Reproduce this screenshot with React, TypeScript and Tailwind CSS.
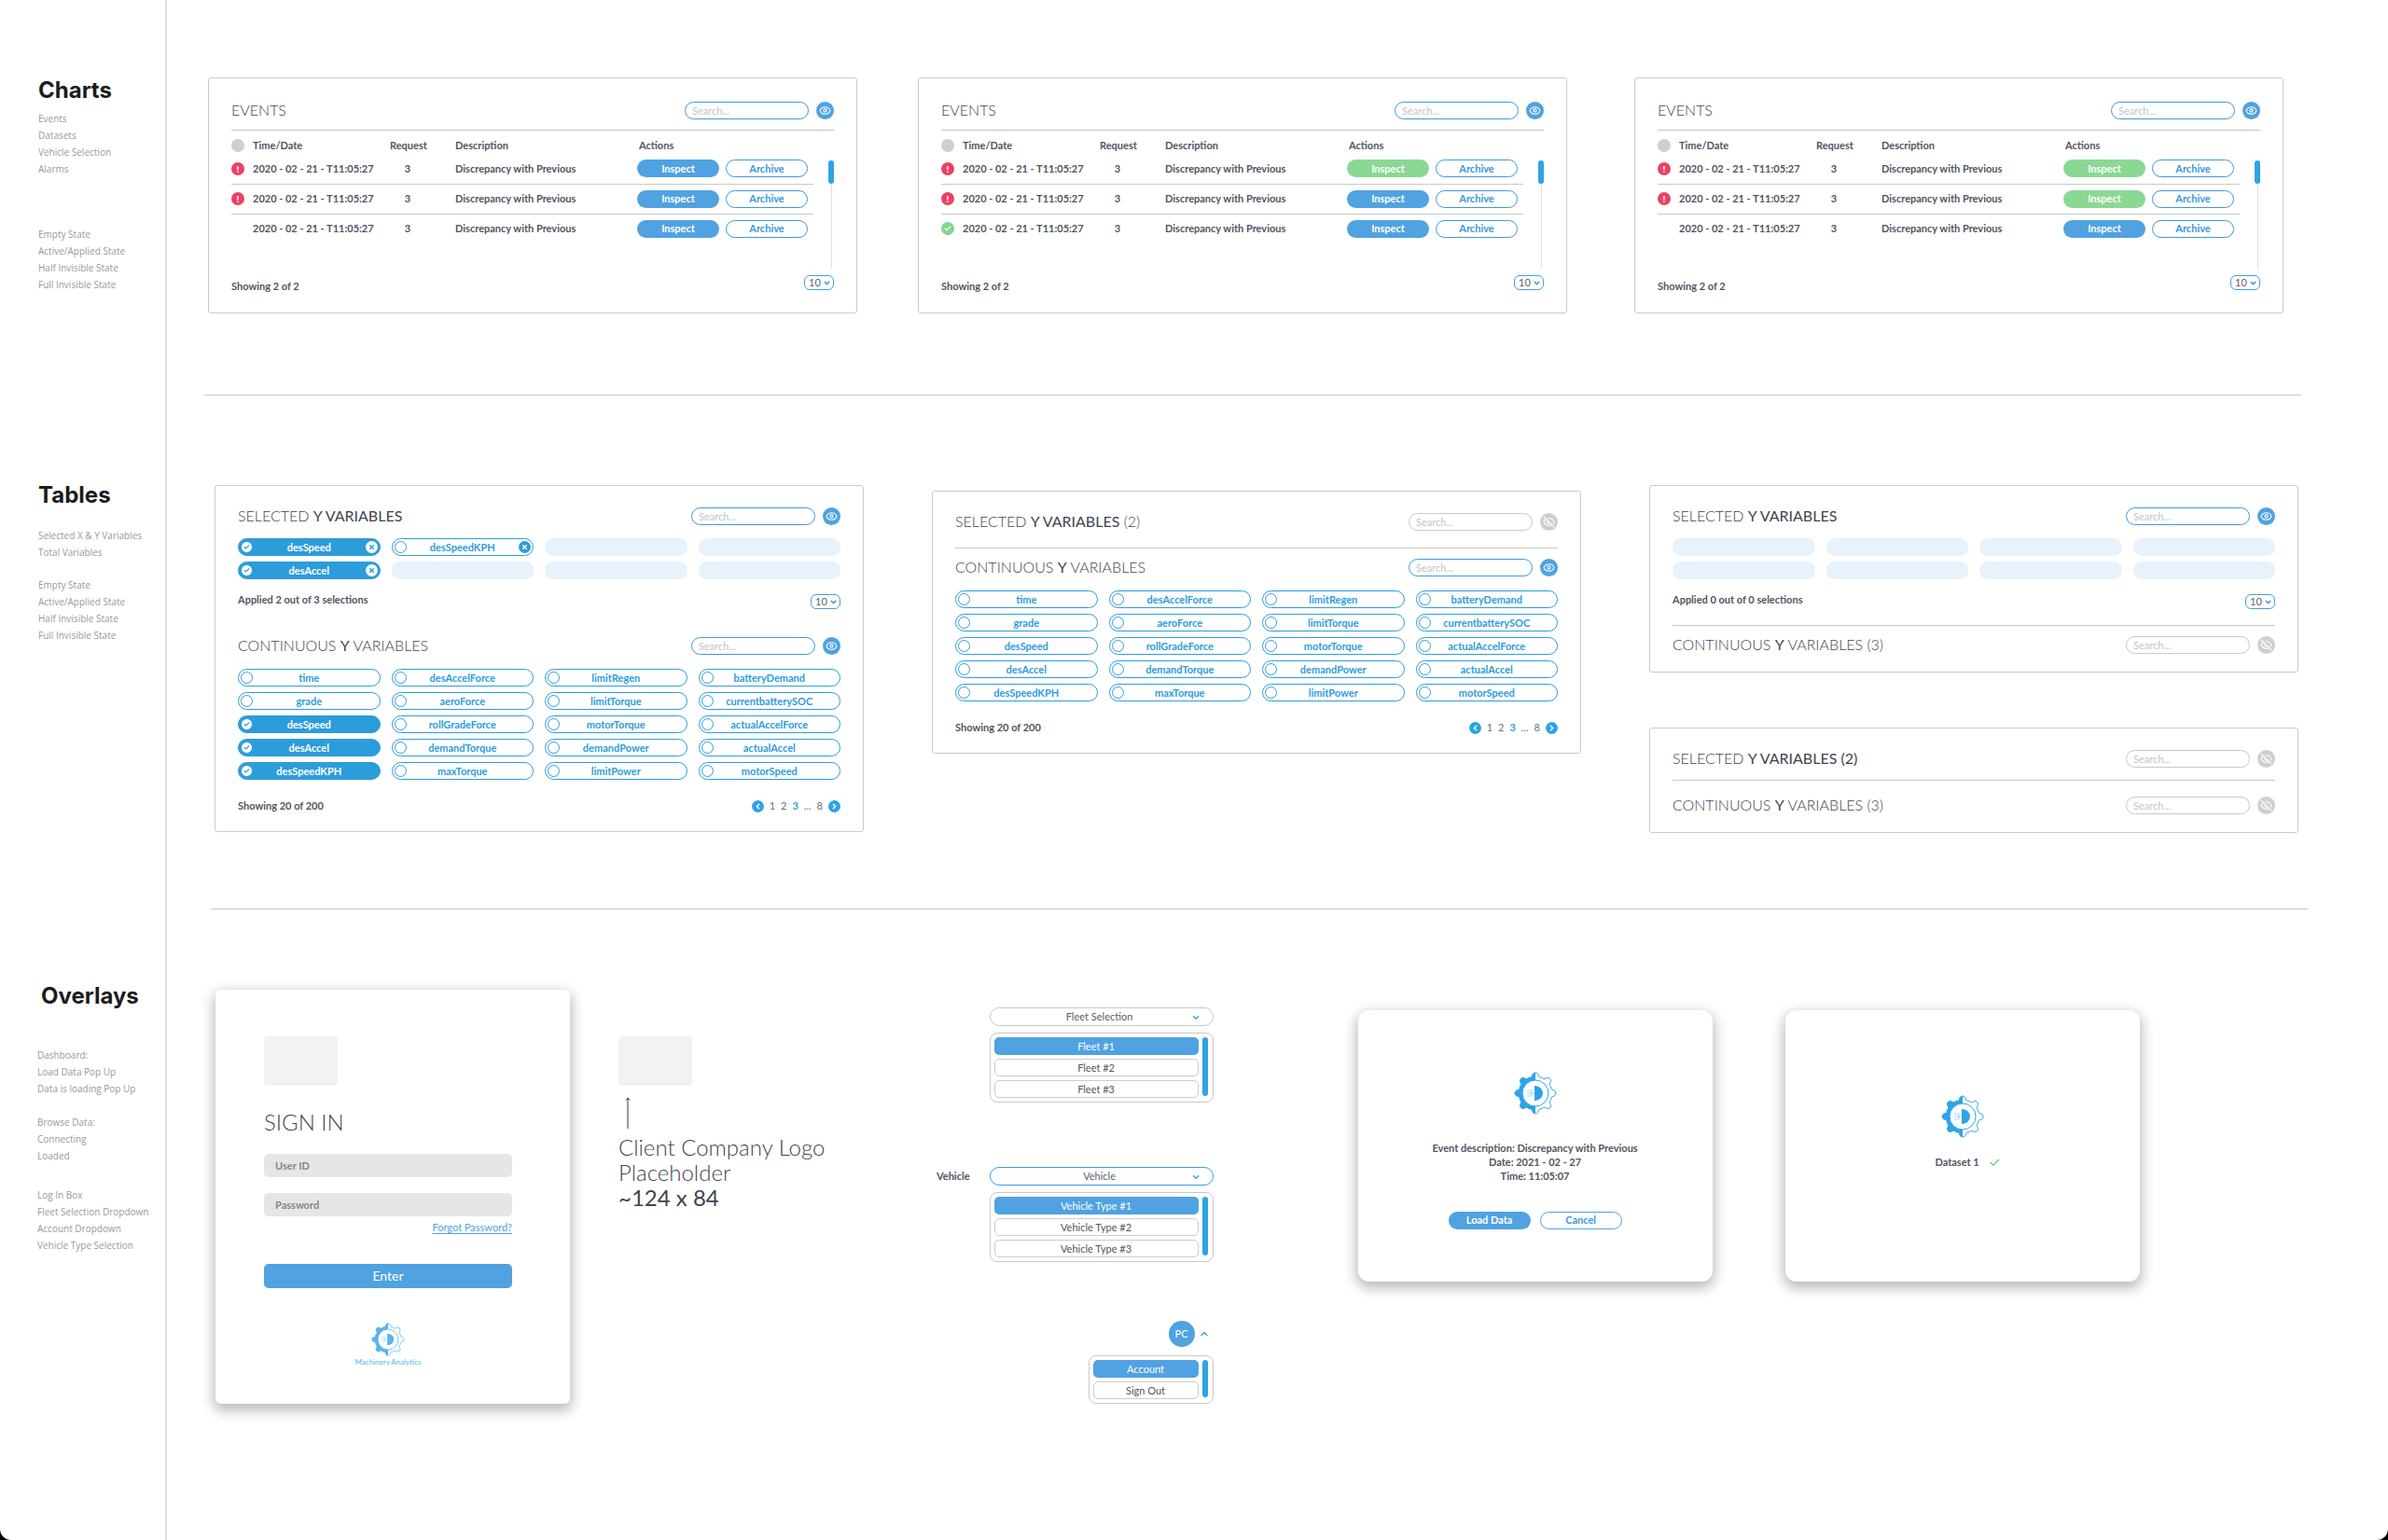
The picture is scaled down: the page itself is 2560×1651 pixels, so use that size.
import { useState, type ReactNode } from 'react';
import { Check, ChevronDown, ChevronLeft, ChevronRight, ChevronUp, Eye, EyeOff, X } from 'lucide-react';

type Status = 'alert' | 'done' | 'none';

interface EventRow {
  status: Status;
  inspected: boolean;
}

const eventCards: EventRow[][] = [
  [
    { status: 'alert', inspected: false },
    { status: 'alert', inspected: false },
    { status: 'none', inspected: false },
  ],
  [
    { status: 'alert', inspected: true },
    { status: 'alert', inspected: false },
    { status: 'done', inspected: false },
  ],
  [
    { status: 'alert', inspected: true },
    { status: 'alert', inspected: true },
    { status: 'none', inspected: false },
  ],
];

const variables = [
  'time', 'desAccelForce', 'limitRegen', 'batteryDemand',
  'grade', 'aeroForce', 'limitTorque', 'currentbatterySOC',
  'desSpeed', 'rollGradeForce', 'motorTorque', 'actualAccelForce',
  'desAccel', 'demandTorque', 'demandPower', 'actualAccel',
  'desSpeedKPH', 'maxTorque', 'limitPower', 'motorSpeed',
];

const stateNotes = ['Empty State', 'Active/Applied State', 'Half Invisible State', 'Full Invisible State'];

// Eight-tooth gear outline centred on 0,0
function gearPath() {
  const point = (deg: number, r: number) => {
    const rad = (deg * Math.PI) / 180;
    return `${(Math.cos(rad) * r).toFixed(2)} ${(Math.sin(rad) * r).toFixed(2)}`;
  };
  let d = `M${point(-106, 17.5)}`;
  for (let i = 0; i < 8; i++) {
    const a = -90 + i * 45;
    d += ` Q${point(a - 11, 18)} ${point(a - 8, 20.5)}`;
    d += ` Q${point(a - 6, 22)} ${point(a, 22)}`;
    d += ` Q${point(a + 6, 22)} ${point(a + 8, 20.5)}`;
    d += ` Q${point(a + 11, 18)} ${point(a + 16, 17.5)}`;
    d += ` Q${point(a + 22, 19)} ${point(a + 29, 17.5)}`;
  }
  return d + 'Z';
}

function GearLogo({ className }: { className: string }) {
  const d = gearPath();
  return (
    <svg viewBox="-23 -23 46 46" className={className} aria-hidden="true">
      <clipPath id="gear-left">
        <rect x="-23" y="-23" width="23" height="46" />
      </clipPath>
      <path d={d} fill="none" stroke="currentColor" strokeWidth="1" />
      <path d={d} fill="currentColor" clipPath="url(#gear-left)" />
      <circle r="14" fill="white" stroke="currentColor" strokeWidth="1" />
      <path d="M-1 -8 A9 8 0 0 1 -1 8 Z" fill="currentColor" />
      <path d="M-9 -3H-4V3H-9M-9 0H-1" fill="none" stroke="currentColor" strokeWidth="0.6" opacity="0.7" />
    </svg>
  );
}

function SideNotes({ title, groups, className, listClass }: { title: string; groups: string[][]; className: string; listClass: string }) {
  return (
    <aside className={`w-[179px] shrink-0 border-r-2 border-[#dedede] ${className}`}>
      <h2 className="text-2xl leading-[28px] font-bold text-[#1c1c1c] [font-family:Inter,sans-serif]">{title}</h2>
      <div className={`flex flex-col text-[10px] leading-[18px] whitespace-nowrap text-[#999999] [font-family:'Open_Sans','Noto_Sans',sans-serif] ${listClass}`}>
        {groups.map((group) => (
          <ul key={group[0]}>
            {group.map((note) => (
              <li key={note}>{note}</li>
            ))}
          </ul>
        ))}
      </div>
    </aside>
  );
}

function Card({ children, className = '' }: { children: ReactNode; className?: string }) {
  return <div className={`rounded-[3px] border border-[#cbcbcb] px-6 ${className}`}>{children}</div>;
}

function PanelHeader({ children, hidden = false }: { children: ReactNode; hidden?: boolean }) {
  const [off, setOff] = useState(hidden);
  return (
    <div className="flex h-5 items-center">
      <h3 className="flex-1 text-base leading-5 font-light whitespace-nowrap text-[#3f444e]">{children}</h3>
      <input
        type="search"
        aria-label="Search"
        placeholder="Search..."
        className={`h-[19px] w-[133px] rounded-full border px-[7px] text-[11px] placeholder:text-[#c4c4c4] ${off ? 'border-[#c8c8c8]' : 'border-[#3f98de]'}`}
      />
      <button
        type="button"
        aria-label="Toggle visibility"
        onClick={() => setOff(!off)}
        className={`ml-2 flex size-[19px] items-center justify-center rounded-full text-white ${off ? 'bg-[#cfcfcf]' : 'bg-[#50a2e1]'}`}
      >
        {off ? <EyeOff size={13} /> : <Eye size={13} />}
      </button>
    </div>
  );
}

function PageSize() {
  return (
    <div className="relative">
      <select
        aria-label="Rows per page"
        className="block h-4 w-8 appearance-none rounded-md border border-[#3fa0e2] bg-white pl-1 text-[11px] leading-[14px] text-[#5b606a]"
      >
        <option>10</option>
      </select>
      <ChevronDown size={9} strokeWidth={4} className="pointer-events-none absolute top-1 right-[3px] text-[#3fa0e2]" />
    </div>
  );
}

function StatusIcon({ status }: { status: Status }) {
  if (status === 'alert') {
    return (
      <span className="flex size-[14px] items-center justify-center rounded-full bg-[#eb4263] text-[10px] font-black text-white">!</span>
    );
  }
  if (status === 'done') {
    return (
      <span className="flex size-[14px] items-center justify-center rounded-full bg-[#86d58f] text-white">
        <Check size={8} strokeWidth={4} />
      </span>
    );
  }
  return null;
}

const pill = 'flex h-[19px] w-[88px] items-center justify-center rounded-full text-[11px] font-bold';

function EventsCard({ rows, className = '' }: { rows: EventRow[]; className?: string }) {
  return (
    <Card className={`flex-1 pt-6 pb-5 ${className}`}>
      <PanelHeader>EVENTS</PanelHeader>
      <div className="mt-[11px] flex items-start justify-between border-t border-[#c4c4c4]">
        <table className="w-[624px] table-fixed text-left text-[11px] leading-4 font-bold text-[#50555f]">
          <colgroup>
            <col className="w-[23px]" />
            <col className="w-[147px]" />
            <col className="w-[38px]" />
            <col />
            <col className="w-[189px]" />
          </colgroup>
          <thead>
            <tr className="h-[25px]">
              <th className="pt-1.5"><span className="block size-[14px] rounded-full bg-[#cfcfcf]" /></th>
              <th className="pt-1.5">Time/Date</th>
              <th className="pt-1.5 text-center">Request</th>
              <th className="pt-1.5 pl-8">Description</th>
              <th className="pt-1.5 pl-0.5">Actions</th>
            </tr>
          </thead>
          <tbody>
            {rows.map((row, i) => (
              <tr key={i} className="h-8 border-b border-[#c8c8c8] last:border-b-0">
                <td><StatusIcon status={row.status} /></td>
                <td>2020 - 02 - 21 - T11:05:27</td>
                <td className="text-center">3</td>
                <td className="pl-8">Discrepancy with Previous</td>
                <td>
                  <div className="flex gap-[7px]">
                    <button type="button" className={`${pill} text-white ${row.inspected ? 'bg-[#8ad894]' : 'bg-[#50a2e1]'}`}>Inspect</button>
                    <button type="button" className={`${pill} border border-[#3f98de] text-[#3a97dd]`}>Archive</button>
                  </div>
                </td>
              </tr>
            ))}
          </tbody>
        </table>
        <div className="mt-8 flex h-[115px] w-1.5 flex-col items-center">
          <div className="h-[25px] w-1.5 rounded-full bg-[#2ea3e6]" />
          <div className="w-px flex-1 bg-[#dedede]" />
        </div>
      </div>
      <div className="mt-2 flex items-start justify-between">
        <p className="pt-1 text-[11px] leading-4 font-bold text-[#50555f]">Showing 2 of 2</p>
        <PageSize />
      </div>
    </Card>
  );
}

function Chip({ name, on = false, removable = false }: { name: string; on?: boolean; removable?: boolean }) {
  return (
    <div className={`flex h-[19px] items-center rounded-full border border-[#2d9cdb] px-0.5 text-[11px] leading-[17px] font-bold ${on ? 'bg-[#2d9cdb] text-white' : 'text-[#2d9cdb]'}`}>
      <label className="flex flex-1 items-center">
        <span className="relative">
          <input type="checkbox" defaultChecked={on} className="block size-[13px] appearance-none rounded-full border border-[#2d9cdb] bg-white" />
          {on && <Check size={7} strokeWidth={4} className="pointer-events-none absolute top-[3px] left-[3px] text-[#2d9cdb]" />}
        </span>
        <span className={`flex-1 text-center ${removable ? '' : 'pr-[13px]'}`}>{name}</span>
      </label>
      {removable && (
        <button type="button" aria-label={`Remove ${name}`} className={`flex size-[13px] items-center justify-center rounded-full ${on ? 'bg-white text-[#2d9cdb]' : 'bg-[#2d9cdb] text-white'}`}>
          <X size={7} strokeWidth={5} />
        </button>
      )}
    </div>
  );
}

function EmptyChips({ count }: { count: number }) {
  return Array.from({ length: count }, (_, i) => <div key={i} className="h-[19px] rounded-[9px] bg-[#e7f2fb]" />);
}

function ChipGrid({ children, className }: { children: ReactNode; className: string }) {
  return <div className={`grid grid-cols-4 gap-x-3 gap-y-1.5 ${className}`}>{children}</div>;
}

function Applied({ text }: { text: string }) {
  return (
    <div className="mt-3.5 flex items-end justify-between">
      <p className="pb-0.5 text-[11px] leading-4 font-bold text-[#50555f]">{text}</p>
      <PageSize />
    </div>
  );
}

function VariableList({ selected = [] }: { selected?: string[] }) {
  return (
    <>
      <ChipGrid className="mt-[15px]">
        {variables.map((name) => (
          <Chip key={name} name={name} on={selected.includes(name)} />
        ))}
      </ChipGrid>
      <div className="mt-5 flex items-center justify-between text-[11px] leading-4">
        <p className="font-bold text-[#50555f]">Showing 20 of 200</p>
        <nav aria-label="Pages" className="flex items-center gap-1.5 text-[#6d727b]">
          <button type="button" aria-label="Previous page" className="flex size-[13px] items-center justify-center rounded-full bg-[#2ea3e6] text-white">
            <ChevronLeft size={9} strokeWidth={4} />
          </button>
          <a href="#1">1</a>
          <a href="#2">2</a>
          <a href="#3" className="font-bold text-[#2ea3e6]">3</a>
          <span>...</span>
          <a href="#8">8</a>
          <button type="button" aria-label="Next page" className="flex size-[13px] items-center justify-center rounded-full bg-[#2ea3e6] text-white">
            <ChevronRight size={9} strokeWidth={4} />
          </button>
        </nav>
      </div>
    </>
  );
}

function Dropdown({ label, options, blue = false }: { label: string; options: string[]; blue?: boolean }) {
  return (
    <div className="w-60">
      <div className="relative">
        <select
          id={label}
          aria-label={label}
          className={`block h-5 w-full appearance-none rounded-full border bg-white pr-1 text-center text-[11px] leading-[18px] text-[#5b606a] [text-align-last:center] ${blue ? 'border-[#3f98de]' : 'border-[#c8c8c8]'}`}
        >
          <option>{label}</option>
        </select>
        <ChevronDown size={10} strokeWidth={4} className="pointer-events-none absolute top-[6px] right-3.5 text-[#50a2e1]" />
      </div>
      <Menu options={options} />
    </div>
  );
}

function Menu({ options }: { options: string[] }) {
  return (
    <div className="mt-[7px] flex gap-1 rounded-lg border border-[#c8c8c8] p-1">
      <div className="flex flex-1 flex-col gap-1">
        {options.map((option, i) => (
          <button
            key={option}
            type="button"
            className={`h-[19px] rounded-[5px] text-center text-[11px] leading-[17px] ${i === 0 ? 'bg-[#50a2e1] text-white' : 'border border-[#cccccc] text-[#50555f]'}`}
          >
            {option}
          </button>
        ))}
      </div>
      <div className="mr-px mb-0.5 w-1.5 rounded-full bg-[#2ea3e6]" />
    </div>
  );
}

const overlayShadow = 'bg-white shadow-[0_5px_14px_2px_rgba(0,0,0,0.28)]';
const loginField = 'h-[25px] rounded-[5px] bg-[#e6e6e6] px-3 text-[11px] font-bold placeholder:text-[#83868c]';

export default function App() {
  return (
    <div className="bg-black">
      <div className="flex min-h-screen flex-col rounded-b-xl bg-white [font-family:Lato,sans-serif]">
        <section className="flex">
          <SideNotes
            title="Charts"
            groups={[['Events', 'Datasets', 'Vehicle Selection', 'Alarms'], stateNotes]}
            className="pt-[83px] pl-[41px]"
            listClass="mt-[7px] gap-[52px]"
          />
          <div className="flex-1 pt-[83px]">
            <div className="flex pr-[112px] pl-11">
              <EventsCard rows={eventCards[0]} className="mr-[65px]" />
              <EventsCard rows={eventCards[1]} className="mr-[72px]" />
              <EventsCard rows={eventCards[2]} />
            </div>
            <hr className="mt-[87px] mr-[93px] ml-10 border-t border-[#c8c8c8]" />
          </div>
        </section>

        <section className="flex">
          <SideNotes
            title="Tables"
            groups={[['Selected X & Y Variables', 'Total Variables'], stateNotes]}
            className="pt-[93px] pl-[41px]"
            listClass="mt-5 gap-[17px]"
          />
          <div className="flex-1 pt-24">
            <div className="grid grid-cols-3 items-start gap-[73px] pr-24 pl-[51px]">
              <Card className="pt-[22px] pb-[19px]">
                <PanelHeader>SELECTED <b>Y VARIABLES</b></PanelHeader>
                <ChipGrid className="mt-3.5">
                  <Chip name="desSpeed" on removable />
                  <Chip name="desSpeedKPH" removable />
                  <EmptyChips count={2} />
                  <Chip name="desAccel" on removable />
                  <EmptyChips count={3} />
                </ChipGrid>
                <Applied text="Applied 2 out of 3 selections" />
                <div className="mt-[29px]">
                  <PanelHeader>CONTINUOUS <b>Y</b> VARIABLES</PanelHeader>
                </div>
                <VariableList selected={['desSpeed', 'desAccel', 'desSpeedKPH']} />
              </Card>

              <Card className="mt-1.5 pt-[22px] pb-[19px]">
                <PanelHeader hidden>SELECTED <b>Y VARIABLES</b> (2)</PanelHeader>
                <hr className="mt-[18px] mb-2.5 border-t border-[#c8c8c8]" />
                <PanelHeader>CONTINUOUS <b>Y</b> VARIABLES</PanelHeader>
                <VariableList />
              </Card>

              <div className="flex flex-col gap-[59px]">
                <Card className="pt-[22px] pb-[19px]">
                  <PanelHeader>SELECTED <b>Y VARIABLES</b></PanelHeader>
                  <ChipGrid className="mt-3.5">
                    <EmptyChips count={8} />
                  </ChipGrid>
                  <Applied text="Applied 0 out of 0 selections" />
                  <hr className="mt-[17px] mb-2.5 border-t border-[#c8c8c8]" />
                  <PanelHeader hidden>CONTINUOUS <b>Y</b> VARIABLES (3)</PanelHeader>
                </Card>
                <Card className="pt-[22px] pb-[19px]">
                  <PanelHeader hidden>SELECTED <b>Y VARIABLES (2)</b></PanelHeader>
                  <hr className="mt-[13px] mb-4 border-t border-[#c8c8c8]" />
                  <PanelHeader hidden>CONTINUOUS <b>Y</b> VARIABLES (3)</PanelHeader>
                </Card>
              </div>
            </div>
            <hr className="mt-[81px] mr-[86px] ml-[47px] border-t border-[#c8c8c8]" />
          </div>
        </section>

        <section className="flex flex-1">
          <SideNotes
            title="Overlays"
            groups={[
              ['Dashboard:', 'Load Data Pop Up', 'Data is loading Pop Up'],
              ['Browse Data:', 'Connecting', 'Loaded'],
              ['Log In Box', 'Fleet Selection Dropdown', 'Account Dropdown', 'Vehicle Type Selection'],
            ]}
            className="pt-[79px] pl-11"
            listClass="-ml-1 mt-[40px] gap-[18px] [&>ul:last-child]:pt-1.5"
          />
          <div className="flex flex-1 items-start pt-[86px] pl-[52px]">
            <form className={`flex w-[380px] flex-col rounded-md pt-[50px] pr-[62px] pb-[39px] pl-[52px] ${overlayShadow}`}>
              <div className="h-[53px] w-[79px] rounded-sm bg-[#f2f2f2]" />
              <h3 className="mt-[25px] text-2xl leading-7 font-light text-[#3f444e]">SIGN IN</h3>
              <input aria-label="User ID" placeholder="User ID" className={`mt-5 ${loginField}`} />
              <input type="password" aria-label="Password" placeholder="Password" className={`mt-[17px] ${loginField}`} />
              <a href="#forgot" className="mt-1 self-end text-[11px] leading-4 text-[#50a2e1] underline underline-offset-2">Forgot Password?</a>
              <button type="button" className="mt-[31px] h-[26px] rounded-[5px] bg-[#50a2e1] text-sm text-white">Enter</button>
              <div className="mt-[37px] flex flex-col items-center text-[#58b3ee]">
                <GearLogo className="size-9" />
                <p className="text-[8px] leading-3">Machinery Analytics</p>
              </div>
            </form>

            <div className="mt-[50px] ml-[52px] w-[240px] text-2xl leading-[27px] font-light text-[#3f444e]">
              <div className="h-[53px] w-[79px] rounded-sm bg-[#f2f2f2]" />
              <svg viewBox="0 0 8 34" className="mt-3 mb-1.5 ml-1.5 h-[34px] w-2" fill="none" stroke="#333" aria-hidden="true">
                <path d="M4 34V1M2 3.5L4 1L6 3.5" />
              </svg>
              <p>Client Company Logo Placeholder</p>
              <p className="font-normal">~124 x 84</p>
            </div>

            <div className="mt-[19px] ml-[101px] flex flex-col items-end">
              <Dropdown label="Fleet Selection" options={['Fleet #1', 'Fleet #2', 'Fleet #3']} />
              <div className="mt-[69px] flex items-start gap-[21px]">
                <label htmlFor="Vehicle" className="text-[11px] leading-5 font-bold text-[#50555f]">Vehicle</label>
                <Dropdown label="Vehicle" options={['Vehicle Type #1', 'Vehicle Type #2', 'Vehicle Type #3']} blue />
              </div>
              <button type="button" aria-label="Account menu" className="mt-[63px] mr-1 flex items-center gap-1 text-[#50a2e1]">
                <span className="flex size-7 items-center justify-center rounded-full bg-[#50a2e1] text-[11px] text-white">PC</span>
                <ChevronUp size={12} strokeWidth={3} />
              </button>
              <div className="mt-0.5 w-[134px]">
                <Menu options={['Account', 'Sign Out']} />
              </div>
            </div>

            <div className={`mt-[22px] ml-[155px] flex h-[291px] w-[380px] flex-col items-center rounded-xl pt-[66px] ${overlayShadow}`}>
              <GearLogo className="size-[46px] text-[#2ea3e6]" />
              <div className="mt-7 text-center text-[11px] leading-[15px] font-bold text-[#50555f]">
                <p>Event description: Discrepancy with Previous</p>
                <p>Date: 2021 - 02 - 27</p>
                <p>Time: 11:05:07</p>
              </div>
              <div className="mt-[31px] flex gap-2.5">
                <button type="button" className={`${pill} bg-[#50a2e1] text-white`}>Load Data</button>
                <button type="button" className={`${pill} border border-[#50a2e1] text-[#3a97dd]`}>Cancel</button>
              </div>
            </div>

            <div className={`mt-[22px] ml-[78px] flex h-[291px] w-[380px] flex-col items-center rounded-xl pt-[91px] ${overlayShadow}`}>
              <GearLogo className="size-[46px] text-[#2ea3e6]" />
              <p className="mt-[18px] ml-3 flex items-center gap-2.5 text-[11px] leading-4 font-bold text-[#50555f]">
                Dataset 1
                <Check size={13} className="text-[#4ccb62]" />
              </p>
            </div>
          </div>
        </section>
      </div>
    </div>
  );
}
